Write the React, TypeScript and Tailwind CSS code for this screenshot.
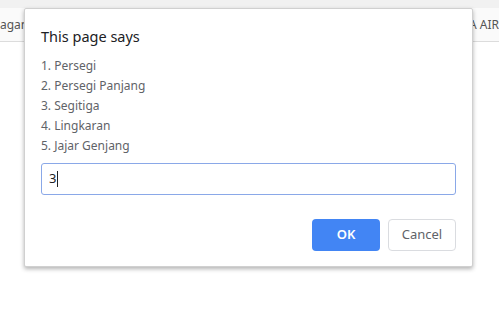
const items = ["1. Persegi", "2. Persegi Panjang", "3. Segitiga", "4. Lingkaran", "5. Jajar Genjang"];

export default function App() {
  return (
    <div className="relative h-[315px] w-[499px] overflow-hidden bg-white font-['Noto_Sans',sans-serif]">
      {/* page behind the dialog */}
      <div className="h-[8px] bg-[#f1f1f1]" />
      <div className="flex h-[34px] items-center justify-between border-b border-[#dcdcdc] bg-[#fafafa] text-[12px] text-[#555]">
        <span>agan</span>
        <span>A AIR</span>
      </div>

      {/* prompt dialog */}
      <div className="absolute left-[24px] top-[8px] w-[449px] rounded-[2px] border border-[#d0d0d0] bg-white px-[16px] pb-[15px] pt-[17px] shadow-[0_2px_4px_rgba(0,0,0,0.3)]">
        <div className="text-[14.5px] leading-[20px] text-[#202124]">This page says</div>
        <div className="mt-[10px] flex flex-col text-[12px] leading-[20px] text-[#5f6368]">
          {items.map((t) => (
            <div key={t}>{t}</div>
          ))}
        </div>
        <div className="mt-[7px] flex h-[32px] items-center rounded-[3px] border border-[#8aa8e8] px-[7px] text-[13px] text-[#202124]">
          <span>3</span>
          <span className="ml-[1px] h-[16px] w-px bg-[#202124]" />
        </div>
        <div className="mt-[24px] flex justify-end gap-[8px]">
          <button className="h-[32px] w-[68px] rounded-[4px] bg-[#4285f4] text-[13px] font-semibold text-white">OK</button>
          <button className="h-[32px] w-[68px] rounded-[4px] border border-[#dadce0] bg-white text-[13px] text-[#5f6368]">Cancel</button>
        </div>
      </div>
    </div>
  );
}
